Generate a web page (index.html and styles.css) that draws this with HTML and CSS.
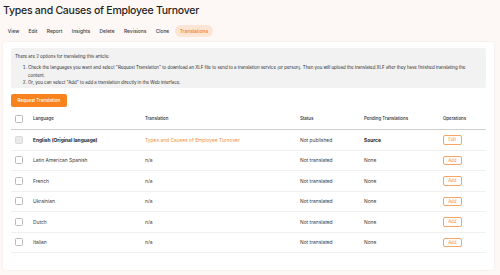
FILE: index.html
```html
<!DOCTYPE html>
<html lang="en">
<head>
<meta charset="utf-8">
<title>Translations</title>
<link rel="stylesheet" href="styles.css">
</head>
<body>
<h1 class="title">Types and Causes of Employee Turnover</h1>
<nav class="tabs">
  <a class="tab">View</a>
  <a class="tab">Edit</a>
  <a class="tab">Report</a>
  <a class="tab">Insights</a>
  <a class="tab">Delete</a>
  <a class="tab">Revisions</a>
  <a class="tab">Clone</a>
  <a class="tab active">Translations</a>
</nav>
<main class="card">
  <div class="info">
    <p>There are 2 options for translating this article:</p>
    <ol>
      <li>Check the languages you want and select "Request Translation" to download an XLF file to send to a translation service (or person). Then you will upload the translated XLF after they have finished translating the content.</li>
      <li>Or, you can select "Add" to add a translation directly in the Web interface.</li>
    </ol>
  </div>
  <button class="primary">Request Translation</button>
  <table class="grid">
    <thead>
      <tr>
        <th class="c-check"><span class="box"></span></th>
        <th class="c-lang">Language</th>
        <th class="c-tr">Translation</th>
        <th class="c-status">Status</th>
        <th class="c-pend">Pending Translations</th>
        <th class="c-op">Operations</th>
      </tr>
    </thead>
    <tbody>
      <tr>
        <td class="c-check"><span class="box disabled"></span></td>
        <td class="strong">English (Original language)</td>
        <td class="link">Types and Causes of Employee Turnover</td>
        <td>Not published</td>
        <td class="strong">Source</td>
        <td><span class="op">Edit</span></td>
      </tr>
      <tr>
        <td class="c-check"><span class="box"></span></td>
        <td>Latin American Spanish</td>
        <td>n/a</td>
        <td>Not translated</td>
        <td>None</td>
        <td><span class="op">Add</span></td>
      </tr>
      <tr>
        <td class="c-check"><span class="box"></span></td>
        <td>French</td>
        <td>n/a</td>
        <td>Not translated</td>
        <td>None</td>
        <td><span class="op">Add</span></td>
      </tr>
      <tr>
        <td class="c-check"><span class="box"></span></td>
        <td>Ukrainian</td>
        <td>n/a</td>
        <td>Not translated</td>
        <td>None</td>
        <td><span class="op">Add</span></td>
      </tr>
      <tr>
        <td class="c-check"><span class="box"></span></td>
        <td>Dutch</td>
        <td>n/a</td>
        <td>Not translated</td>
        <td>None</td>
        <td><span class="op">Add</span></td>
      </tr>
      <tr>
        <td class="c-check"><span class="box"></span></td>
        <td>Italian</td>
        <td>n/a</td>
        <td>Not translated</td>
        <td>None</td>
        <td><span class="op">Add</span></td>
      </tr>
    </tbody>
  </table>
</main>
</body>
</html>
```

FILE: styles.css
```css
* { box-sizing: border-box; }
html, body { margin: 0; padding: 0; }
body {
  background: #fdf8f5;
  font-family: Inter, "Noto Sans", sans-serif;
  color: #2b2b2b;
  padding: 3px 6px 0 3px;
  width: 500px;
  height: 275px;
  overflow: hidden;
}
.title {
  margin: 0;
  font-size: 10.5px;
  font-weight: 500;
  letter-spacing: -0.25px;
  line-height: 16px;
  color: #1f1f1f;
}
.tabs {
  display: flex;
  align-items: center;
  margin-top: 6px;
  height: 12px;
  padding-left: 0;
}
.tab {
  font-size: 4.9px;
  font-weight: 500;
  color: #3a3a3a;
  padding: 0 4.7px;
  line-height: 12px;
  border-radius: 6px;
}
.tab.active {
  background: #fde5d6;
  color: #f07d2c;
  margin-left: 1px;
}
.card {
  margin-top: 5px;
  background: #fff;
  border-radius: 3px;
  box-shadow: 0 0 2px rgba(0,0,0,0.08);
  padding: 6px 8px 17px 8px;
  width: 491px;
}
.info {
  background: #f2f2f2;
  border-radius: 2px;
  padding: 5px 4px 1px 4px;
  font-size: 4.4px;
  line-height: 7px;
  color: #2b2b2b;
}
.info p { margin: 0 0 4px 0; }
.info ol { margin: 0; padding-left: 13px; }
.info li { line-height: 7.5px; }
.primary {
  display: block;
  margin-top: 6px;
  background: #f7821e;
  color: #fff;
  border: none;
  border-radius: 2px;
  font-family: inherit;
  font-size: 4.5px;
  font-weight: 500;
  height: 13px;
  padding: 0 6.5px;
}
.grid {
  width: 100%;
  border-collapse: collapse;
  margin-top: 2px;
  font-size: 4.9px;
}
.grid th {
  text-align: left;
  font-weight: 500;
  font-size: 4.4px;
  height: 21px;
  padding: 0;
  border-bottom: 1.5px solid #cfcfcf;
  color: #2b2b2b;
}
.grid td {
  padding: 0;
  height: 20.5px;
  border-bottom: 1px solid #f0f0f0;
  color: #3a3a3a;
}
.c-check { width: 22px; padding-left: 4px !important; }
.c-lang { width: 112px; }
.c-tr { width: 155px; }
.c-status { width: 64px; }
.c-pend { width: 79px; }
.box {
  display: block;
  width: 8px;
  height: 8px;
  border: 0.8px solid #b9b9b9;
  border-radius: 1.5px;
  background: #fff;
}
.box.disabled { background: #e9e9e9; border-color: #dadada; }
.strong { font-weight: 700; color: #222 !important; }
.link { color: #f3903f !important; }
.op {
  display: inline-block;
  border: 1px solid #f7a465;
  color: #f58a36;
  border-radius: 2px;
  font-size: 4.3px;
  width: 18.5px;
  height: 9.5px;
  line-height: 7.5px;
  text-align: center;
}
```
